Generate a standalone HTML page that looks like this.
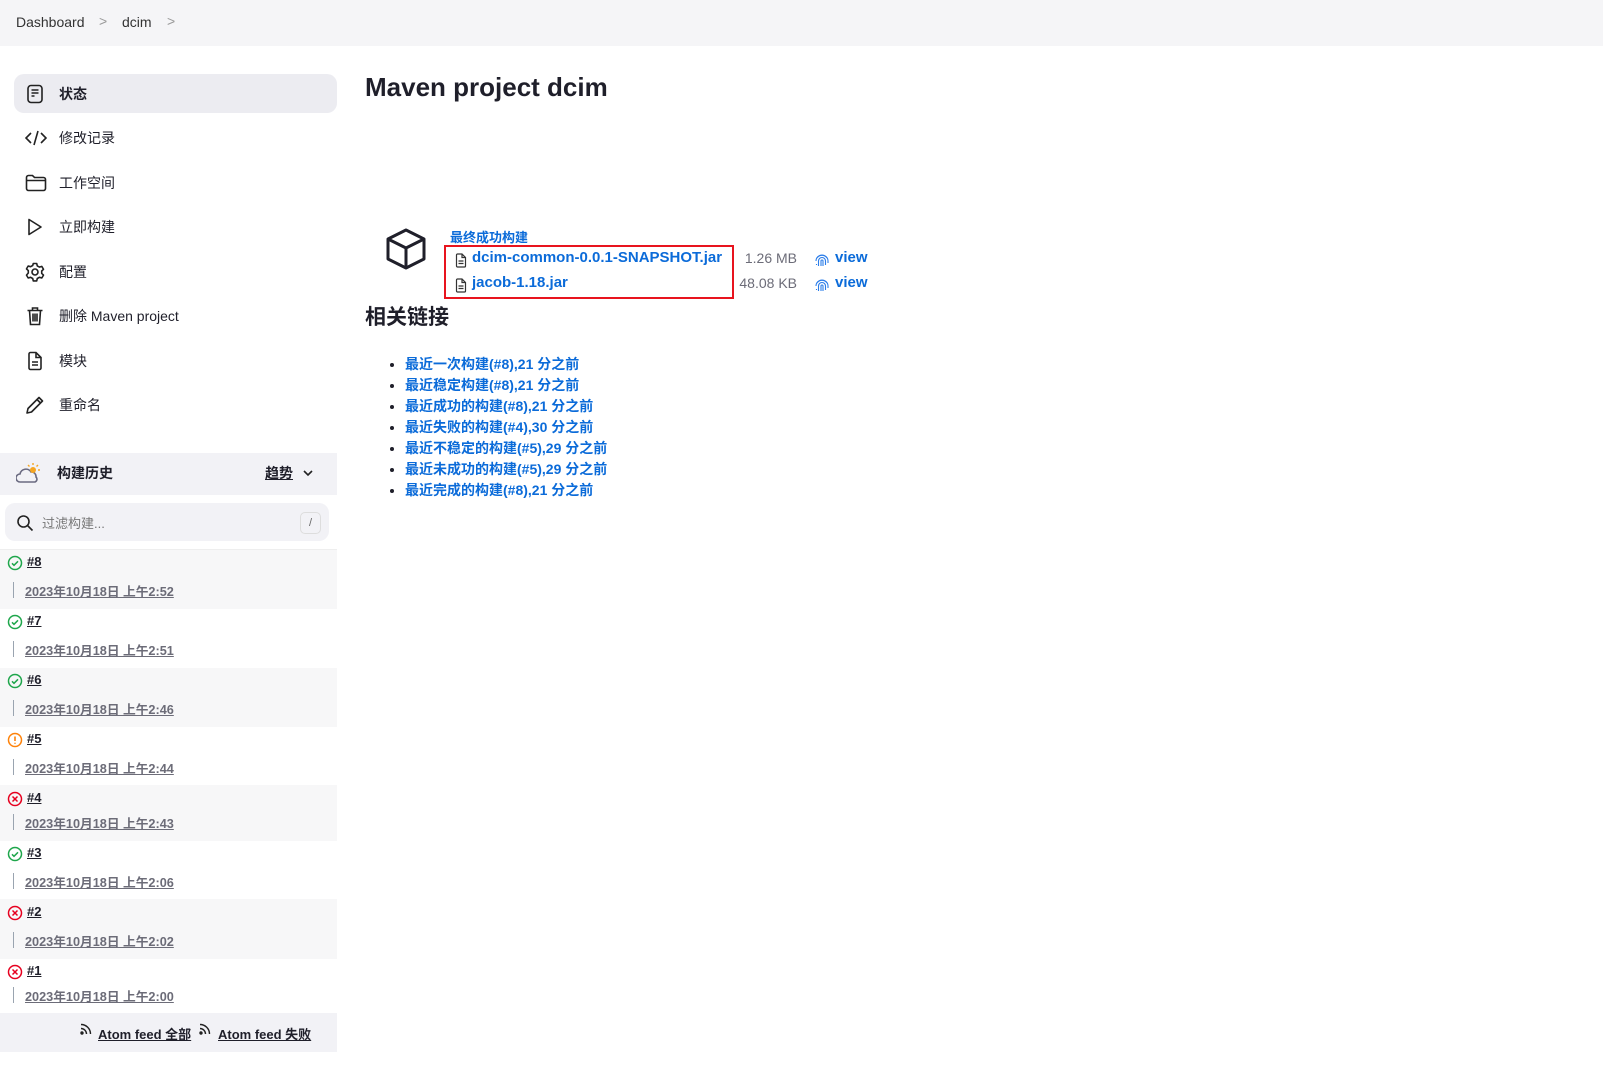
<!DOCTYPE html>
<html><head><meta charset="utf-8"><style>
*{box-sizing:border-box;margin:0;padding:0}
body{width:1603px;height:1067px;background:#fff;font-family:"Liberation Sans","Noto Sans CJK SC",sans-serif;color:#1f1f2a;position:relative;overflow:hidden;font-size:14px}
.a{position:absolute;white-space:nowrap}
.top{position:absolute;left:0;top:0;width:1603px;height:46px;background:#f5f5f7}
.sel{position:absolute;left:14px;top:74px;width:323px;height:39px;background:#ececf1;border-radius:10px}
.nav{position:absolute;left:25px;font-size:14px;line-height:20px;width:300px;height:20px;white-space:nowrap}
.nav svg{position:absolute;left:0;top:0}
.nav span{position:absolute;left:34px;top:0;white-space:nowrap}
.lnk{color:#0b6bd9;font-weight:bold}
.row{position:absolute;left:0;width:337px}
.num{position:absolute;left:27px;font-size:13px;font-weight:bold;text-decoration:underline;color:#1f1f2a}
.dt{position:absolute;left:25px;font-size:12.7px;font-weight:bold;text-decoration:underline;color:#6c6c78;white-space:nowrap}
.bar{position:absolute;left:13px;width:1px;height:16px;background:#9aa4b0}
ul{position:absolute;left:405px;top:354px;list-style:disc;font-size:14px;line-height:21px}
li{color:#0b6bd9;font-weight:bold;white-space:nowrap}
li::marker{color:#1f1f2a}
</style></head><body>
<div class="top"></div>
<div class="a" style="left:16px;top:14px;font-size:14px;color:#333">Dashboard</div>
<div class="a" style="left:99px;top:13px;font-size:14px;color:#999">&gt;</div>
<div class="a" style="left:122px;top:14px;font-size:14px;color:#333">dcim</div>
<div class="a" style="left:167px;top:13px;font-size:14px;color:#999">&gt;</div>

<div class="sel"></div>
<div class="nav" style="top:84px"><svg width="20" height="20" viewBox="0 0 20 20" fill="none" stroke="#222" stroke-width="1.6"><rect x="3" y="1.5" width="14" height="17" rx="3"/><path d="M6.5 6h7M6.5 9h7M6.5 12h3"/></svg><span style="font-weight:bold">状态</span></div>
<div class="nav" style="top:128px"><svg width="22" height="20" viewBox="0 0 22 20" fill="none" stroke="#222" stroke-width="1.6"><path d="M6 5l-5 5 5 5M16 5l5 5-5 5M13 3L9 17"/></svg><span>修改记录</span></div>
<div class="nav" style="top:173px"><svg width="22" height="20" viewBox="0 0 22 20" fill="none" stroke="#222" stroke-width="1.6"><path d="M1.5 4.5a2 2 0 012-2h4l2 2h9a2 2 0 012 2v9a2 2 0 01-2 2h-15a2 2 0 01-2-2z M1.5 7.5h19"/></svg><span>工作空间</span></div>
<div class="nav" style="top:217px"><svg width="20" height="20" viewBox="0 0 20 20" fill="none" stroke="#222" stroke-width="1.6"><path d="M4 2.5v15l12-7.5z" stroke-linejoin="round"/></svg><span>立即构建</span></div>
<div class="nav" style="top:262px"><svg width="20" height="20" viewBox="0 0 20 20" fill="none" stroke="#222" stroke-width="1.6"><circle cx="10" cy="10" r="3"/><path d="M8.3 1.5h3.4l.6 2.4 2.1 1.2 2.4-.7 1.7 2.9-1.8 1.7v2.4l1.8 1.7-1.7 2.9-2.4-.7-2.1 1.2-.6 2.4H8.3l-.6-2.4-2.1-1.2-2.4.7-1.700-2.9L3.3 11V8.6L1.5 6.9l1.7-2.9 2.4.7 2.1-1.2z" stroke-linejoin="round"/></svg><span>配置</span></div>
<div class="nav" style="top:306px"><svg width="20" height="20" viewBox="0 0 20 20" fill="none" stroke="#222" stroke-width="1.6"><path d="M2.5 4.5h15M7.5 4.5V2h5v2.5M4.5 4.5l1 14h9l1-14M8 7.5v8M10 7.5v8M12 7.5v8"/></svg><span>删除 Maven project</span></div>
<div class="nav" style="top:351px"><svg width="20" height="20" viewBox="0 0 20 20" fill="none" stroke="#222" stroke-width="1.6"><path d="M4 3a1.5 1.5 0 011.5-1.5H11l5 5V17a1.5 1.5 0 01-1.5 1.5h-9A1.5 1.5 0 014 17z M11 1.5V6.5h5M7 11h6M7 14h6"/></svg><span>模块</span></div>
<div class="nav" style="top:395px"><svg width="20" height="20" viewBox="0 0 20 20" fill="none" stroke="#222" stroke-width="1.6"><path d="M2 18l1-4.5L14 2.5l3.5 3.5L6.5 17z M12 4.5l3.5 3.5" stroke-linejoin="round"/></svg><span>重命名</span></div>

<div class="a" style="left:0;top:453px;width:337px;height:42px;background:#f2f2f6"></div>
<svg class="a" style="left:16px;top:462px" width="26" height="24" viewBox="0 0 26 24" fill="none"><path d="M4 20a4 4 0 010-8 6 6 0 0111-2 4.5 4.5 0 015 5 3 3 0 01-1 5z" stroke="#6a6a80" stroke-width="1.6"/><circle cx="17" cy="8" r="3" fill="#f5a623"/><path d="M17 1v2M22 3l-1.5 1.5M24 8h-2M12 3l1.5 1.5" stroke="#f5a623" stroke-width="1.4"/></svg>
<div class="a" style="left:57px;top:463px;font-size:14px;font-weight:bold">构建历史</div>
<div class="a" style="left:265px;top:463px;font-size:14px;font-weight:bold;text-decoration:underline">趋势</div>
<svg class="a" style="left:302px;top:468px" width="12" height="10" viewBox="0 0 12 10" fill="none" stroke="#222" stroke-width="1.6"><path d="M2 3l4 4 4-4"/></svg>
<div class="a" style="left:5px;top:503px;width:324px;height:38px;background:#f2f2f6;border-radius:10px"></div>
<svg class="a" style="left:16px;top:514px" width="18" height="18" viewBox="0 0 18 18" fill="none" stroke="#222" stroke-width="1.6"><circle cx="7.5" cy="7.5" r="5.5"/><path d="M11.5 11.5l5 5"/></svg>
<div class="a" style="left:42px;top:513px;font-size:13px;color:#777">过滤构建...</div>
<div class="a" style="left:300px;top:512px;width:21px;height:22px;border:1px solid #ddd;border-radius:5px;font-size:11px;color:#666;text-align:center;line-height:20px">/</div>

<div class="row" style="top:549px;height:60px;background:#f7f7f8;border-top:1px solid #eee"></div>
<div class="row" style="top:668px;height:59px;background:#f7f7f8"></div>
<div class="row" style="top:785px;height:56px;background:#f7f7f8"></div>
<div class="row" style="top:899px;height:60px;background:#f7f7f8"></div>

<svg width="0" height="0" style="position:absolute"><defs>
<g id="ok"><circle cx="8" cy="8" r="6.5" fill="none" stroke="#1ea64b" stroke-width="1.5"/><path d="M5 8.3l2 2 4-4" fill="none" stroke="#1ea64b" stroke-width="1.5"/></g>
<g id="er"><circle cx="8" cy="8" r="6.5" fill="none" stroke="#e6001f" stroke-width="1.5"/><path d="M5.5 5.5l5 5M10.5 5.5l-5 5" stroke="#e6001f" stroke-width="1.5"/></g>
<g id="wa"><circle cx="8" cy="8" r="6.5" fill="none" stroke="#fe820a" stroke-width="1.5"/><path d="M8 4.5v4.5M8 10.8v1" stroke="#fe820a" stroke-width="1.6"/></g>
</defs></svg>
<svg class="a" style="left:7px;top:555px" width="16" height="16"><use href="#ok"/></svg><div class="num" style="top:554px">#8</div><div class="bar" style="top:582px"></div><div class="dt" style="top:581px">2023年10月18日 上午2:52</div>
<svg class="a" style="left:7px;top:614px" width="16" height="16"><use href="#ok"/></svg><div class="num" style="top:613px">#7</div><div class="bar" style="top:641px"></div><div class="dt" style="top:640px">2023年10月18日 上午2:51</div>
<svg class="a" style="left:7px;top:673px" width="16" height="16"><use href="#ok"/></svg><div class="num" style="top:672px">#6</div><div class="bar" style="top:700px"></div><div class="dt" style="top:699px">2023年10月18日 上午2:46</div>
<svg class="a" style="left:7px;top:732px" width="16" height="16"><use href="#wa"/></svg><div class="num" style="top:731px">#5</div><div class="bar" style="top:759px"></div><div class="dt" style="top:758px">2023年10月18日 上午2:44</div>
<svg class="a" style="left:7px;top:791px" width="16" height="16"><use href="#er"/></svg><div class="num" style="top:790px">#4</div><div class="bar" style="top:814px"></div><div class="dt" style="top:813px">2023年10月18日 上午2:43</div>
<svg class="a" style="left:7px;top:846px" width="16" height="16"><use href="#ok"/></svg><div class="num" style="top:845px">#3</div><div class="bar" style="top:873px"></div><div class="dt" style="top:872px">2023年10月18日 上午2:06</div>
<svg class="a" style="left:7px;top:905px" width="16" height="16"><use href="#er"/></svg><div class="num" style="top:904px">#2</div><div class="bar" style="top:932px"></div><div class="dt" style="top:931px">2023年10月18日 上午2:02</div>
<svg class="a" style="left:7px;top:964px" width="16" height="16"><use href="#er"/></svg><div class="num" style="top:963px">#1</div><div class="bar" style="top:987px"></div><div class="dt" style="top:986px">2023年10月18日 上午2:00</div>

<div class="a" style="left:0;top:1013px;width:337px;height:39px;background:#f2f2f6"></div>
<svg class="a" style="left:80px;top:1023px" width="12" height="12" viewBox="0 0 12 12" fill="none" stroke="#222" stroke-width="1.4"><circle cx="2" cy="10" r="1" fill="#222"/><path d="M1 5.5a5.5 5.5 0 015.5 5.5M1 1.5a9.5 9.5 0 019.5 9.5"/></svg>
<div class="a" style="left:98px;top:1024px;font-size:13px;font-weight:bold;text-decoration:underline">Atom feed 全部</div>
<svg class="a" style="left:199px;top:1023px" width="12" height="12" viewBox="0 0 12 12" fill="none" stroke="#222" stroke-width="1.4"><circle cx="2" cy="10" r="1" fill="#222"/><path d="M1 5.5a5.5 5.5 0 015.5 5.5M1 1.5a9.5 9.5 0 019.5 9.5"/></svg>
<div class="a" style="left:218px;top:1024px;font-size:13px;font-weight:bold;text-decoration:underline">Atom feed 失败</div>

<div class="a" style="left:365px;top:72px;font-size:26px;font-weight:bold">Maven project dcim</div>
<svg class="a" style="left:384px;top:227px" width="44" height="44" viewBox="0 0 44 44" fill="none" stroke="#1f1f2a" stroke-width="3" stroke-linejoin="round"><path d="M22 3L40 12v20L22 41 4 32V12z M4 12l18 9 18-9 M22 21v20"/></svg>
<div class="a lnk" style="left:450px;top:227px;font-size:13px">最终成功构建</div>
<div class="a" style="left:444px;top:245px;width:290px;height:54px;border:2px solid #e8141e"></div>
<svg class="a" style="left:455px;top:253px" width="12" height="15" viewBox="0 0 12 15" fill="none" stroke="#333" stroke-width="1.2"><path d="M1.5 2a1 1 0 011-1H7l3.5 3.5V13a1 1 0 01-1 1h-7a1 1 0 01-1-1z M7 1v3.5h3.5M3.5 8h5M3.5 10.5h5"/></svg>
<div class="a lnk" style="left:472px;top:249px;font-size:15px">dcim-common-0.0.1-SNAPSHOT.jar</div>
<svg class="a" style="left:455px;top:278px" width="12" height="15" viewBox="0 0 12 15" fill="none" stroke="#333" stroke-width="1.2"><path d="M1.5 2a1 1 0 011-1H7l3.5 3.5V13a1 1 0 01-1 1h-7a1 1 0 01-1-1z M7 1v3.5h3.5M3.5 8h5M3.5 10.5h5"/></svg>
<div class="a lnk" style="left:472px;top:274px;font-size:15px">jacob-1.18.jar</div>
<div class="a" style="left:742px;top:250px;width:55px;text-align:right;font-size:14px;color:#6c6c78">1.26 MB</div>
<div class="a" style="left:732px;top:275px;width:65px;text-align:right;font-size:14px;color:#6c6c78">48.08 KB</div>
<svg class="a" style="left:815px;top:253px" width="14" height="15" viewBox="0 0 14 15" fill="none" stroke="#2b7de9" stroke-width="1.1"><path d="M2 5a6 6 0 0110 0M1 8a6 6 0 0112 0v2M3.5 13V8a3.5 3.5 0 017 0v4M6 13V8a1 1 0 012 0v5M1.5 11v1"/></svg>
<div class="a lnk" style="left:835px;top:249px;font-size:15px">view</div>
<svg class="a" style="left:815px;top:278px" width="14" height="15" viewBox="0 0 14 15" fill="none" stroke="#2b7de9" stroke-width="1.1"><path d="M2 5a6 6 0 0110 0M1 8a6 6 0 0112 0v2M3.5 13V8a3.5 3.5 0 017 0v4M6 13V8a1 1 0 012 0v5M1.5 11v1"/></svg>
<div class="a lnk" style="left:835px;top:274px;font-size:15px">view</div>
<div class="a" style="left:365px;top:301px;font-size:21px;font-weight:bold">相关链接</div>
<ul>
<li>最近一次构建(#8),21 分之前</li>
<li>最近稳定构建(#8),21 分之前</li>
<li>最近成功的构建(#8),21 分之前</li>
<li>最近失败的构建(#4),30 分之前</li>
<li>最近不稳定的构建(#5),29 分之前</li>
<li>最近未成功的构建(#5),29 分之前</li>
<li>最近完成的构建(#8),21 分之前</li>
</ul>
</body></html>
